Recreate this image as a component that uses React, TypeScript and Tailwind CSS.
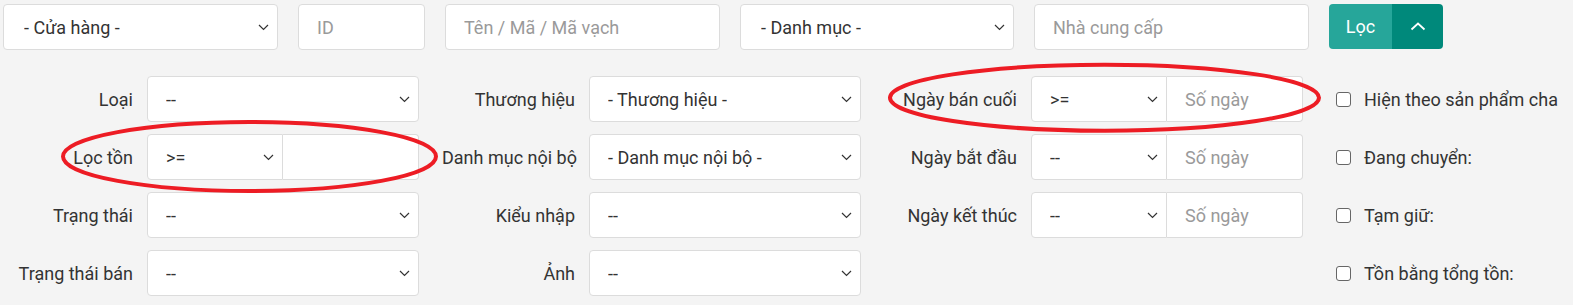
import React from 'react';

const Chevron: React.FC = () => (
  <svg width="11" height="7" viewBox="0 0 11 7" className="shrink-0" aria-hidden="true">
    <path d="M1 1l4.5 4.5L10 1" fill="none" stroke="#333" strokeWidth="1.2" />
  </svg>
);

const Select: React.FC<{ value: string; className?: string }> = ({ value, className = '' }) => (
  <div
    className={`flex h-[46px] items-center justify-between bg-white border border-[#dcdcdc] pl-[18px] pr-[8px] ${className}`}
  >
    <span className="truncate">{value}</span>
    <Chevron />
  </div>
);

const TextInput: React.FC<{ placeholder: string; className?: string }> = ({ placeholder, className = '' }) => (
  <input
    placeholder={placeholder}
    className={`h-[46px] bg-white border border-[#dcdcdc] px-[18px] outline-none placeholder:text-[#9a9a9a] ${className}`}
  />
);

const Group: React.FC<{ value: string; placeholder?: string }> = ({ value, placeholder = '' }) => (
  <div className="flex w-[272px]">
    <Select value={value} className="w-1/2 rounded-l-[4px]" />
    <TextInput placeholder={placeholder} className="w-1/2 min-w-0 rounded-r-[4px] border-l-0" />
  </div>
);

const Field: React.FC<{ label: string; children: React.ReactNode }> = ({ label, children }) => (
  <div className="flex items-center">
    <label className="w-[133px] text-right whitespace-nowrap">{label}</label>
    <div className="ml-[14px]">{children}</div>
  </div>
);

const Check: React.FC<{ label: string }> = ({ label }) => (
  <div className="flex items-center pl-[10px]">
    <span className="w-[15px] h-[15px] rounded-[3px] border border-[#666] bg-white" />
    <span className="ml-[13px] whitespace-nowrap">{label}</span>
  </div>
);

const Plain: React.FC<{ value: string }> = ({ value }) => (
  <Select value={value} className="w-[272px] rounded-[4px]" />
);

export default function App() {
  const rows: React.ReactNode[][] = [
    [
      <Field label="Loại"><Plain value="--" /></Field>,
      <Field label="Thương hiệu"><Plain value="- Thương hiệu -" /></Field>,
      <Field label="Ngày bán cuối"><Group value=">=" placeholder="Số ngày" /></Field>,
      <Check label="Hiện theo sản phẩm cha" />,
    ],
    [
      <Field label="Lọc tồn"><Group value=">=" /></Field>,
      <Field label="Danh mục nội bộ"><Plain value="- Danh mục nội bộ -" /></Field>,
      <Field label="Ngày bắt đầu"><Group value="--" placeholder="Số ngày" /></Field>,
      <Check label="Đang chuyển:" />,
    ],
    [
      <Field label="Trạng thái"><Plain value="--" /></Field>,
      <Field label="Kiểu nhập"><Plain value="--" /></Field>,
      <Field label="Ngày kết thúc"><Group value="--" placeholder="Số ngày" /></Field>,
      <Check label="Tạm giữ:" />,
    ],
    [
      <Field label="Trạng thái bán"><Plain value="--" /></Field>,
      <Field label="Ảnh"><Plain value="--" /></Field>,
      <div />,
      <Check label="Tồn bằng tổng tồn:" />,
    ],
  ];

  return (
    <div className="relative w-full h-[305px] overflow-hidden bg-[#f4f4f4] text-[18px] text-[#333] font-['Roboto',sans-serif]">
      {/* top filter bar */}
      <div className="flex gap-[20px] pt-[4px] pl-[3px]">
        <Select value="- Cửa hàng -" className="w-[275px] rounded-[4px] pl-[20px]" />
        <TextInput placeholder="ID" className="w-[127px] rounded-[4px]" />
        <TextInput placeholder="Tên / Mã / Mã vạch" className="w-[275px] rounded-[4px]" />
        <Select value="- Danh mục -" className="w-[274px] rounded-[4px] pl-[20px]" />
        <TextInput placeholder="Nhà cung cấp" className="w-[275px] rounded-[4px]" />
        <div className="flex h-[45px] rounded-[4px] overflow-hidden text-white">
          <button className="w-[63px] bg-[#26a69a]">Lọc</button>
          <button className="w-[51px] flex items-center justify-center bg-[#00897b]">
            <svg width="16" height="9" viewBox="0 0 16 9" aria-hidden="true">
              <path d="M1.5 7.5L8 1.5l6.5 6" fill="none" stroke="#fff" strokeWidth="1.8" />
            </svg>
          </button>
        </div>
      </div>

      {/* advanced filters */}
      <div className="mt-[26px] flex flex-col gap-[12px]">
        {rows.map((cells, i) => (
          <div key={i} className="grid grid-cols-[442px_442px_442px_1fr] h-[46px]">
            {cells.map((c, j) => (
              <div key={j} className="flex items-center">{c}</div>
            ))}
          </div>
        ))}
      </div>

      {/* red annotation marks */}
      <svg className="absolute inset-0 pointer-events-none" width="1573" height="305" aria-hidden="true">
        <ellipse cx="249.5" cy="156.5" rx="186.5" ry="34.5" fill="none" stroke="#ed1c24" strokeWidth="4" />
        <ellipse cx="1104.5" cy="97.7" rx="214.5" ry="33" fill="none" stroke="#ed1c24" strokeWidth="4" />
      </svg>
    </div>
  );
}
